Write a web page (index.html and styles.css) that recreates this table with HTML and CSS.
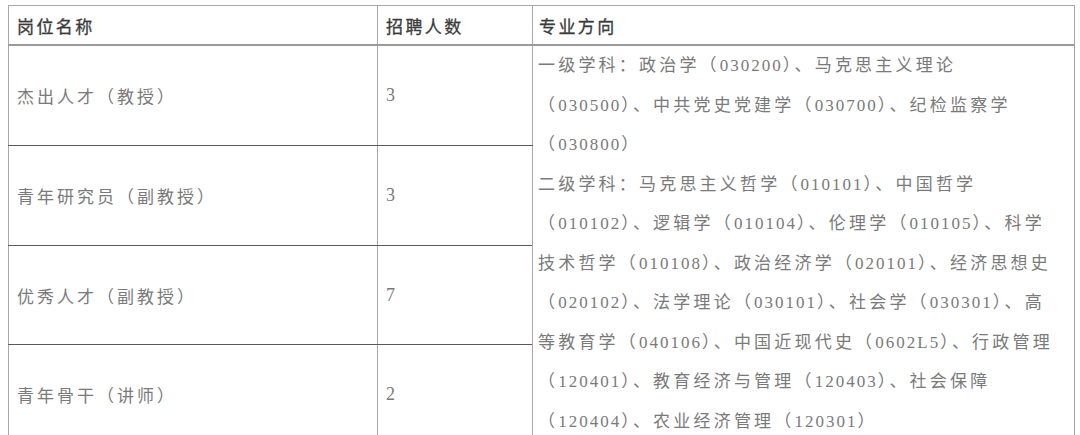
FILE: index.html
```html
<!DOCTYPE html>
<html lang="zh-CN">
<head>
<meta charset="utf-8">
<title>招聘岗位</title>
<link rel="stylesheet" href="styles.css">
</head>
<body>
<div class="page">
<table class="jobs">
  <colgroup>
    <col class="col-name">
    <col class="col-num">
    <col class="col-major">
  </colgroup>
  <thead>
    <tr class="head">
      <th>岗位名称</th>
      <th>招聘人数</th>
      <th class="th-major">专业方向</th>
    </tr>
  </thead>
  <tbody>
    <tr class="r1">
      <td class="name">杰出人才（教授）</td>
      <td class="num">3</td>
      <td class="major" rowspan="4">
        <div class="ln">一级学科：政治学（<span class="n">030200</span>）、马克思主义理论</div>
        <div class="ln">（<span class="n">030500</span>）、中共党史党建学（<span class="n">030700</span>）、纪检监察学</div>
        <div class="ln">（<span class="n">030800</span>）</div>
        <div class="ln">二级学科：马克思主义哲学（<span class="n">010101</span>）、中国哲学</div>
        <div class="ln">（<span class="n">010102</span>）、逻辑学（<span class="n">010104</span>）、伦理学（<span class="n">010105</span>）、科学</div>
        <div class="ln">技术哲学（<span class="n">010108</span>）、政治经济学（<span class="n">020101</span>）、经济思想史</div>
        <div class="ln">（<span class="n">020102</span>）、法学理论（<span class="n">030101</span>）、社会学（<span class="n">030301</span>）、高</div>
        <div class="ln">等教育学（<span class="n">040106</span>）、中国近现代史（<span class="n">0602L5</span>）、行政管理</div>
        <div class="ln">（<span class="n">120401</span>）、教育经济与管理（<span class="n">120403</span>）、社会保障</div>
        <div class="ln">（<span class="n">120404</span>）、农业经济管理（<span class="n">120301</span>）</div>
      </td>
    </tr>
    <tr class="r2">
      <td class="name">青年研究员（副教授）</td>
      <td class="num">3</td>
    </tr>
    <tr class="r3">
      <td class="name">优秀人才（副教授）</td>
      <td class="num">7</td>
    </tr>
    <tr class="r4">
      <td class="name">青年骨干（讲师）</td>
      <td class="num">2</td>
    </tr>
  </tbody>
</table>
</div>
</body>
</html>
```

FILE: styles.css
```css
html, body {
  margin: 0;
  padding: 0;
  background: #ffffff;
  overflow: hidden;
}

.page {
  padding: 5px 0 0 8px;
  font-family: "Liberation Serif", "Noto Sans CJK SC", serif;
  font-size: 17px;
  color: #7a7a7a;
}

.jobs {
  border-collapse: collapse;
  table-layout: fixed;
  width: 1066px;
}

.col-name { width: 369px; }
.col-num { width: 155px; }
.col-major { width: 542px; }

.jobs th,
.jobs td {
  border: 1px solid #a8a8a8;
  padding: 0 0 0 8px;
  text-align: left;
  letter-spacing: 3px;
  white-space: nowrap;
}

.jobs th {
  height: 38px;
  font-weight: normal;
  color: #3a3a3a;
  font-family: "Noto Sans CJK SC", sans-serif;
  letter-spacing: 2.4px;
  border-bottom: 2px solid #9a9a9a;
  vertical-align: middle;
  -webkit-text-stroke: 0.3px #3a3a3a;
}

.jobs th.th-major {
  padding-left: 6px;
}

.jobs td.name,
.jobs td.num {
  vertical-align: middle;
  border-bottom-color: #5a5a5a;
}

.jobs td.num {
  font-size: 18px;
}

.r1 td, .r2 td, .r4 td { height: 99px; }
.r3 td { height: 98px; }

.jobs td.major {
  vertical-align: top;
  padding: 0 0 0 5px;
  border-right-color: #a0a0a0;
  letter-spacing: 3.2px;
}

.ln {
  height: 39.5px;
  line-height: 39.5px;
}

.n {
  font-family: "Liberation Serif", serif;
  letter-spacing: 2px;
}
```
